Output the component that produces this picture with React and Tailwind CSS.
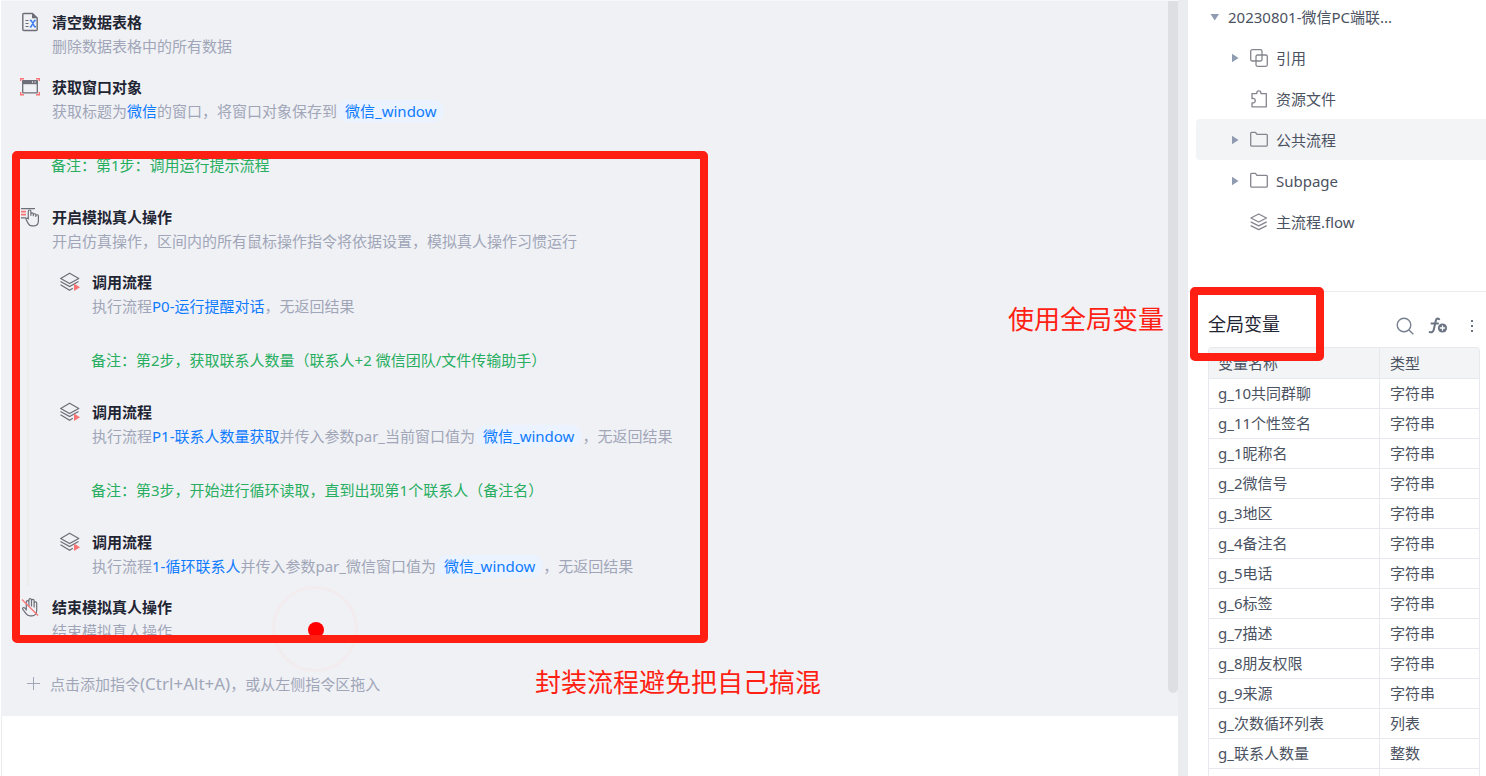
const variables = [
    ['g_10共同群聊', '字符串'],
    ['g_11个性签名', '字符串'],
    ['g_1昵称名', '字符串'],
    ['g_2微信号', '字符串'],
    ['g_3地区', '字符串'],
    ['g_4备注名', '字符串'],
    ['g_5电话', '字符串'],
    ['g_6标签', '字符串'],
    ['g_7描述', '字符串'],
    ['g_8朋友权限', '字符串'],
    ['g_9来源', '字符串'],
    ['g_次数循环列表', '列表'],
    ['g_联系人数量', '整数'],
    ['', ''],
]

function SheetIcon() {
    return (
        <svg width="20" height="20" viewBox="0 0 20 20" fill="none">
            <path d="M12.5 1.5H3.8a1 1 0 0 0-1 1v15a1 1 0 0 0 1 1h12.4a1 1 0 0 0 1-1V6z" stroke="#6d6e77" strokeWidth="1.4" />
            <path d="M12 1v5.2h5.4z" fill="#6d6e77" />
            <path d="M5.5 8.5h3M5.5 11.5h3M5.5 14.5h3" stroke="#6d6e77" strokeWidth="1.2" />
            <path d="M9.8 8.5h1.4l3.4 6.2H16M15.8 8.5h-1.3l-3.4 6.2H9.8" stroke="#3b7cf5" strokeWidth="1.4" />
        </svg>
    )
}

function WindowIcon() {
    return (
        <svg width="20" height="20" viewBox="0 0 20 20" fill="none">
            <path d="M.7 4V1.7H4M16 1.7h3.3V4M.7 15v2.8H4M16 17.8h3.3V15" stroke="#f87575" strokeWidth="1.4" />
            <rect x="2.7" y="3.7" width="14.6" height="12.2" rx=".6" stroke="#6d6e77" strokeWidth="1.3" />
            <path d="M2.5 3.2h15v4h-15z" fill="#6d6e77" />
            <path d="M12.5 4v2M15 4v2" stroke="#c9cad0" strokeWidth="1" />
        </svg>
    )
}

function PointerIcon() {
    return (
        <svg width="20" height="20" viewBox="0 0 20 20" fill="none">
            <path d="M1 1.6h14M1 10.8h5" stroke="#6d6e77" strokeWidth="1.2" />
            <path d="M1 4.7h5M1 7.6h5" stroke="#f87575" strokeWidth="1.8" />
            <path d="M8.3 12V4.3a1.3 1.3 0 0 1 2.6 0v4-1.2a1.2 1.2 0 0 1 2.4 0v1.6-.8a1.2 1.2 0 0 1 2.5.2v1.3-.5a1.3 1.3 0 0 1 2.6.3v4.6c0 2.9-1.7 5-4.3 5h-2.2c-1.8 0-2.8-.8-3.6-2.2l-2.1-3.8c-.8-1.4.9-2.4 2.1-.8z" stroke="#6d6e77" strokeWidth="1.2" strokeLinejoin="round" />
        </svg>
    )
}

function CallFlowIcon() {
    return (
        <svg width="20" height="20" viewBox="0 0 20 20" fill="none">
            <path d="M9.6 1.2 18.8 6.4 9.6 11.6.7 6.4z" stroke="#6d6e77" strokeWidth="1.2" strokeLinejoin="round" />
            <path d="M.5 9.4 9.6 14.6 18.5 9.6M.5 12.8l9.1 5.4 3.2-1.9" stroke="#6d6e77" strokeWidth="1.2" />
            <path d="M14 11.4 20 15.2 14 19z" fill="#f87575" />
        </svg>
    )
}

function StopHandIcon() {
    return (
        <svg width="20" height="20" viewBox="0 0 20 20" fill="none">
            <path d="M6.3 13V5a1.3 1.3 0 0 1 2.6 0v4V3a1.3 1.3 0 0 1 2.6 0v6V3.6a1.3 1.3 0 0 1 2.6 0V10V6.2a1.3 1.3 0 0 1 2.6 0v7c0 3.3-2 5.6-4.7 5.6H10c-2 0-3-.7-4-2.2l-3.2-4.2c-.9-1.5.9-2.5 2-1.4z" stroke="#6d6e77" strokeWidth="1.2" strokeLinejoin="round" />
            <path d="M2 2.5 18 18.5" stroke="#f87575" strokeWidth="1.3" />
        </svg>
    )
}

function Command({ icon, title, nested, children }) {
    return (
        <li className={nested ? 'flex h-[65px] gap-3 pl-[59px] pt-[9px]' : 'flex h-[65px] gap-3 pl-[19px] pt-[9px]'}>
            <span className="mt-[2px] h-5 w-5 shrink-0">{icon}</span>
            <div className="whitespace-nowrap leading-6">
                <h3 className="font-bold text-[#1f2533]">{title}</h3>
                <p className="text-[#a0a6b8]">{children}</p>
            </div>
        </li>
    )
}

function Note({ nested, children }) {
    return (
        <li className={nested ? 'h-[65px] whitespace-nowrap pl-[90px] pt-[22px] leading-6 text-[#27ae60]' : 'h-[65px] whitespace-nowrap pl-[50px] pt-[22px] leading-6 text-[#27ae60]'}>
            {children}
        </li>
    )
}

function Ref({ children }) {
    return <a href="#" className="text-[#0f7bff]">{children}</a>
}

function Chip({ children }) {
    return (
        <a href="#" className="inline-block rounded-full bg-[#eaf3ff] px-2 leading-[22px] text-[#0f7bff]">
            {children}
        </a>
    )
}

function TreeItem({ icon, label, expandable, active }) {
    return (
        <li>
            <button type="button" className={active ? 'flex h-[41px] w-full items-center rounded-l bg-[#f3f4f6] pl-9' : 'flex h-[41px] w-full items-center pl-9'}>
                <span className="w-[18px]">
                    {expandable && (
                        <svg width="7" height="10" viewBox="0 0 7 10"><path d="M0 .8 6.5 5 0 9.2z" fill="#8e9bb0" /></svg>
                    )}
                </span>
                <svg width="18" height="18" viewBox="0 0 18 18" fill="none" stroke="#85858f" strokeWidth="1.3" strokeLinejoin="round">{icon}</svg>
                <span className="ml-2 pt-px">{label}</span>
            </button>
        </li>
    )
}

const folder = <path d="M.7 14.3V2.2a.8.8 0 0 1 .8-.8h4l1.4 2h9.6a.8.8 0 0 1 .8.8v10.1a.8.8 0 0 1-.8.8h-15a.8.8 0 0 1-.8-.8z" />

export default function App() {
    return (
        <div className="flex h-screen overflow-hidden bg-white pl-px font-['Noto_Sans','Noto_Sans_CJK_SC',sans-serif] text-[15px]">
            {/* Flow editor */}
            <main className="relative min-w-0 flex-1 border-t border-[#f8f8fa] shadow-[inset_1px_0_0_#ebecf0]">
                <div className="bg-[#f0f1f5]">
                    <ol>
                        <Command icon={<SheetIcon />} title="清空数据表格">删除数据表格中的所有数据</Command>
                        <Command icon={<WindowIcon />} title="获取窗口对象">
                            获取标题为<Ref>微信</Ref>的窗口，将窗口对象保存到<Chip>微信_window</Chip>
                        </Command>
                        <Note>备注：第1步：调用运行提示流程</Note>
                        <Command icon={<PointerIcon />} title="开启模拟真人操作">
                            开启仿真操作，区间内的所有鼠标操作指令将依据设置，模拟真人操作习惯运行
                        </Command>
                        <li className="relative">
                            <span className="absolute inset-y-0 left-[26px] w-[2px] bg-[#ebecec]" />
                            <ol>
                                <Command nested icon={<CallFlowIcon />} title="调用流程">
                                    执行流程<Ref>P0-运行提醒对话</Ref>，无返回结果
                                </Command>
                                <Note nested>备注：第2步，获取联系人数量（联系人+2 微信团队/文件传输助手）</Note>
                                <Command nested icon={<CallFlowIcon />} title="调用流程">
                                    执行流程<Ref>P1-联系人数量获取</Ref>并传入参数par_当前窗口值为<Chip>微信_window</Chip>，无返回结果
                                </Command>
                                <Note nested>备注：第3步，开始进行循环读取，直到出现第1个联系人（备注名）</Note>
                                <Command nested icon={<CallFlowIcon />} title="调用流程">
                                    执行流程<Ref>1-循环联系人</Ref>并传入参数par_微信窗口值为<Chip>微信_window</Chip>，无返回结果
                                </Command>
                            </ol>
                        </li>
                        <Command icon={<StopHandIcon />} title="结束模拟真人操作">结束模拟真人操作</Command>
                    </ol>
                    <button type="button" className="flex h-[65px] w-full items-center gap-[10px] pl-[25px] text-[#a0a6b8]">
                        <svg width="14" height="14" viewBox="0 0 14 14" stroke="#a0a6b8"><path d="M7.5 0v13M1 6.5h13" /></svg>
                        <span>点击添加指令<kbd className="font-['Noto_Sans',sans-serif] text-[17px] leading-6">(Ctrl+Alt+A)</kbd>，或从左侧指令区拖入</span>
                    </button>
                </div>

                {/* Scrollbar thumb */}
                <span className="absolute right-0 top-0 h-[692px] w-[10px] rounded-b-full bg-[#dedfe3]" />

                {/* Click ripple */}
                <span className="absolute left-[271px] top-[585px] h-[86px] w-[86px] rounded-full border-[3px] border-[#f3ecee]" />
                <span className="absolute left-[307px] top-[621px] h-4 w-4 rounded-full bg-[#ff0000]" />

                {/* Callouts */}
                <span className="absolute left-[11px] top-[150px] h-[492px] w-[696px] rounded-[5px] border-8 border-[#ff1f13]" />
                <p className="absolute left-[534px] top-[661px] whitespace-nowrap text-[26px] leading-10 text-[#ff1f13]">封装流程避免把自己搞混</p>
                <p className="absolute right-[14px] top-[298px] whitespace-nowrap text-[26px] leading-10 text-[#ff1f13]">使用全局变量</p>
            </main>

            <div className="w-[10px] shrink-0 bg-[#ebecf0]" />

            {/* Project tree and variables */}
            <aside className="w-[298px] shrink-0 text-[#4b5261]">
                <nav className="h-[291px] pl-2">
                    <button type="button" className="flex h-[37px] w-full items-center gap-2 pl-[14px] pb-[2px]">
                        <svg width="10" height="8" viewBox="0 0 10 8"><path d="M.5 0h8.5L4.75 6.5z" fill="#8e9bb0" /></svg>
                        20230801-微信PC端联...
                    </button>
                    <ul>
                        <TreeItem
                            expandable
                            label="引用"
                            icon={<><rect x=".7" y=".7" width="11.3" height="11.3" rx="1.5" /><rect x="6" y="6" width="11.3" height="11.3" rx="1.5" /></>}
                        />
                        <TreeItem
                            label="资源文件"
                            icon={<path d="M2 3.6h4.8V3a2 2 0 0 1 4.1 0v.6h5.4v13.2H2v-4c2 .4 3.3-.6 3.3-2.2S4 8 2 8.5z" />}
                        />
                        <TreeItem expandable active label="公共流程" icon={folder} />
                        <TreeItem expandable label="Subpage" icon={folder} />
                        <TreeItem
                            label="主流程.flow"
                            icon={<path d="M8.7 1 16.5 5 8.7 9 .9 5zM.7 8.8l8 4 8-4M.7 12.6l8 4 8-4" />}
                        />
                    </ul>
                </nav>
                <section className="relative border-t border-[#ebecf0] pl-5 pr-[6px]">
                    <header className="flex h-[55px] items-center pt-[13px]">
                        <h2 className="flex-1 pb-1 text-lg leading-6 text-[#1f2533]">全局变量</h2>
                        <button type="button" aria-label="搜索">
                            <svg width="18" height="18" viewBox="0 0 18 18" fill="none" stroke="#777f90" strokeWidth="1.4"><circle cx="8" cy="8" r="6.8" /><path d="m13 13 4.3 4.3" /></svg>
                        </button>
                        <button type="button" aria-label="添加变量" className="ml-[14px]">
                            <svg width="20" height="18" viewBox="0 0 20 18" fill="none" stroke="#6b7282" strokeLinecap="round">
                                <path d="M11.2 2.2C9.8 1 8.2 1.6 7.7 4L5.8 12.5c-.5 2.4-2 3.3-4.1 2.6M3.5 6.4h6.5" strokeWidth="2" />
                                <circle cx="14.5" cy="11" r="4.6" fill="#6b7282" stroke="none" />
                                <path d="M14.5 8.8v4.4M12.3 11h4.4" stroke="#fff" strokeWidth="1.3" />
                            </svg>
                        </button>
                        <button type="button" aria-label="更多" className="ml-[17px] mr-[1px]">
                            <svg width="14" height="14" viewBox="0 0 14 14" fill="#6b7282"><path d="M6 1h2v2H6zM6 6h2v2H6zM6 11h2v2H6z" /></svg>
                        </button>
                    </header>
                    <table className="w-full table-fixed border-separate border-spacing-0 rounded-t border-l border-t border-[#e8e9ef] text-left leading-[29px]">
                        <thead>
                            <tr className="bg-[#f3f4f6]">
                                <th className="h-[31px] rounded-tl border-b border-r border-[#e8e9ef] p-0 pl-[9px] font-normal">变量名称</th>
                                <th className="h-[31px] w-[100px] rounded-tr border-b border-r border-[#e8e9ef] p-0 pl-[10px] font-normal">类型</th>
                            </tr>
                        </thead>
                        <tbody>
                            {variables.map(([name, type], i) => (
                                <tr key={i}>
                                    <td className="h-[30px] border-b border-r border-[#e8e9ef] p-0 pl-[9px]">{name}</td>
                                    <td className="h-[30px] border-b border-r border-[#e8e9ef] p-0 pl-[10px]">{type}</td>
                                </tr>
                            ))}
                        </tbody>
                    </table>
                    <span className="absolute -top-[5px] left-[2px] h-[74px] w-[134px] rounded-[5px] border-8 border-[#ff1f13]" />
                </section>
            </aside>
        </div>
    )
}
